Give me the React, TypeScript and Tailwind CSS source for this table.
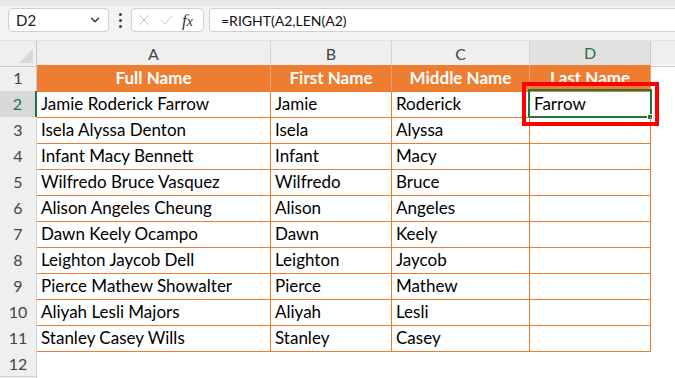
import { ChevronDown, X, Check } from "lucide-react";

const rows = [
  ["Jamie Roderick Farrow", "Jamie", "Roderick", "Farrow"],
  ["Isela Alyssa Denton", "Isela", "Alyssa", ""],
  ["Infant Macy Bennett", "Infant", "Macy", ""],
  ["Wilfredo Bruce Vasquez", "Wilfredo", "Bruce", ""],
  ["Alison Angeles Cheung", "Alison", "Angeles", ""],
  ["Dawn Keely Ocampo", "Dawn", "Keely", ""],
  ["Leighton Jaycob Dell", "Leighton", "Jaycob", ""],
  ["Pierce Mathew Showalter", "Pierce", "Mathew", ""],
  ["Aliyah Lesli Majors", "Aliyah", "Lesli", ""],
  ["Stanley Casey Wills", "Stanley", "Casey", ""],
];

const cols = "grid grid-cols-[37px_234px_121px_138px_121px_1fr]";

function FormulaBar() {
  return (
    <div className="h-[40px] bg-[#f3f3f3] border-t-[6px] border-[#e9e9e9] flex items-start pt-[2px] pl-2">
      <div className="w-[101px] h-[24px] bg-white border border-[#d0d0d0] rounded-[4px] flex items-center justify-between pl-[7px] pr-[6px] text-[15px] text-[#222]">
        <span>D2</span>
        <ChevronDown size={14} strokeWidth={2.5} className="text-[#333]" />
      </div>
      <div className="w-[22px] h-[24px] flex flex-col items-center justify-center gap-[3px]">
        <span className="w-[3px] h-[3px] rounded-full bg-[#444]" />
        <span className="w-[3px] h-[3px] rounded-full bg-[#444]" />
        <span className="w-[3px] h-[3px] rounded-full bg-[#444]" />
      </div>
      <div className="w-[73px] h-[24px] bg-white border border-[#d0d0d0] rounded-[4px] flex items-center pl-[3px] gap-[5px] text-[#bdbdbd]">
        <X size={18} strokeWidth={1.3} />
        <Check size={18} strokeWidth={1.3} />
        <span className="font-['Liberation_Serif',serif] italic text-[17px] text-[#333] leading-none ml-[1px]">
          f<span className="text-[14px]">x</span>
        </span>
      </div>
      <div className="ml-[5px] flex-1 h-[24px] bg-white border border-[#d0d0d0] border-r-0 rounded-l-[4px] flex items-center pl-[11px] text-[14px] text-[#111]">
        =RIGHT(A2,LEN(A2)
      </div>
    </div>
  );
}

function HeaderRow() {
  const letters = ["A", "B", "C", "D"];
  return (
    <div className={`${cols} h-[25px] bg-[#efefef] text-[#444] text-[16px] border-t border-[#e4e4e4]`}>
      <div className="border-r border-b border-[#c8c8c8] relative overflow-hidden">
        <div className="absolute right-[3px] bottom-[3px] w-0 h-0 border-l-[14px] border-l-transparent border-b-[14px] border-b-[#d8d8d8]" />
      </div>
      {letters.map((l) =>
        l === "D" ? (
          <div key={l} className="bg-[#e1e1e1] border-r border-[#c8c8c8] border-b-2 border-b-[#217346] text-[#217346] flex items-center justify-center">
            {l}
          </div>
        ) : (
          <div key={l} className="border-r border-b border-[#d4d4d4] border-b-[#c8c8c8] flex items-center justify-center">
            {l}
          </div>
        )
      )}
      <div className="border-b border-[#c8c8c8]" />
    </div>
  );
}

function RowHead({ n, active }: { n?: number; active?: boolean }) {
  return (
    <div
      className={
        active
          ? "bg-[#d8d8d8] text-[#217346] text-[16px] border-r-2 border-r-[#217346] border-b border-b-[#cfcfcf] flex items-center justify-center"
          : "bg-[#efefef] text-[#444] text-[16px] border-r border-b border-[#cfcfcf] flex items-center justify-center"
      }
    >
      {n}
    </div>
  );
}

export default function App() {
  return (
    <div className="w-[675px] h-[378px] overflow-hidden bg-white font-['Lato',sans-serif]">
      <FormulaBar />
      <HeaderRow />
      <div className={`${cols} h-[26px] text-[17px]`}>
        <RowHead n={1} />
        {["Full Name", "First Name", "Middle Name", "Last Name"].map((h) => (
          <div key={h} className="bg-[#ed7d31] text-white font-bold flex items-center justify-center border-r border-b border-[#ed7d31] border-r-[#f0a070]">
            {h}
          </div>
        ))}
        <div />
      </div>
      {rows.map((r, i) => (
        <div key={i} className={`${cols} h-[26px] text-[17px] text-black`}>
          <RowHead n={i + 2} active={i === 0} />
          {r.map((c, j) => (
            <div key={j} className="relative border-r border-b border-[#ed7d31] flex items-center pl-[4px] whitespace-nowrap">
              {c}
              {i === 0 && j === 3 && (
                <>
                  <div className="absolute -left-[2px] -top-[2px] -right-[2px] -bottom-[1px] border-2 border-[#217346] pointer-events-none" />
                  <div className="absolute -right-[3px] -bottom-[3px] w-[6px] h-[6px] bg-[#217346] border border-white" />
                  <div className="absolute -left-[8px] -top-[9px] -right-[9px] -bottom-[9px] border-4 border-[#ff0000] pointer-events-none z-10" />
                </>
              )}
            </div>
          ))}
          <div />
        </div>
      ))}
      <div className={`${cols} h-[26px]`}>
        <RowHead n={12} />
      </div>
      <div className={`${cols} h-[26px]`}>
        <RowHead />
      </div>
    </div>
  );
}
